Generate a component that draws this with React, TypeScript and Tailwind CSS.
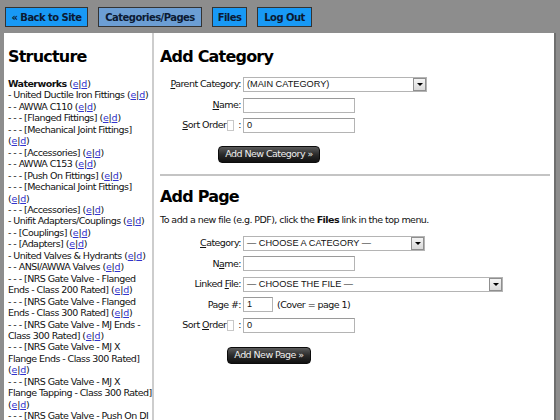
import React from "react";

const sans = "[font-family:'DejaVu_Sans',Verdana,sans-serif]";
const arial = "[font-family:'Liberation_Sans',Arial,sans-serif]";

function Ed() {
  return (
    <span className="tracking-[-0.2px]">
      (<a className="text-[#3333cc] underline">e</a>|<a className="text-[#3333cc] underline">d</a>)
    </span>
  );
}

const items: string[] = [
  "- United Ductile Iron Fittings ",
  "- - AWWA C110 ",
  "- - - [Flanged Fittings] ",
  "- - - [Mechanical Joint Fittings]\n",
  "- - - [Accessories] ",
  "- - AWWA C153 ",
  "- - - [Push On Fittings] ",
  "- - - [Mechanical Joint Fittings]\n",
  "- - - [Accessories] ",
  "- Unifit Adapters/Couplings ",
  "- - [Couplings] ",
  "- - [Adapters] ",
  "- United Valves & Hydrants ",
  "- - ANSI/AWWA Valves ",
  "- - - [NRS Gate Valve - Flanged\nEnds - Class 200 Rated] ",
  "- - - [NRS Gate Valve - Flanged\nEnds - Class 300 Rated] ",
  "- - - [NRS Gate Valve - MJ Ends -\nClass 300 Rated] ",
  "- - - [NRS Gate Valve - MJ X\nFlange Ends - Class 300 Rated]\n",
  "- - - [NRS Gate Valve - MJ X\nFlange Tapping - Class 300 Rated]\n",
  "- - - [NRS Gate Valve - Push On DI\nPipe - Class 250 Rated] ",
];

function NavBtn({ label, w, active }: { label: string; w: string; active?: boolean }) {
  return (
    <div
      className={`${w} h-[20px] border border-[#333] flex items-center justify-center text-[10px] font-bold tracking-[-0.55px] text-[#0b1a33] ${
        active ? "bg-[#6c9ed4]" : "bg-[#1899f5]"
      }`}
    >
      {label}
    </div>
  );
}

function Select({ w, text }: { w: string; text: string }) {
  return (
    <div className={`${w} h-[15px] border border-[#b4b4b4] bg-white flex items-stretch`}>
      <div className={`flex-1 ${arial} text-[9.2px] leading-[13px] pl-[3px] text-[#111] tracking-normal`}>{text}</div>
      <div className="w-[13px] border border-[#8f8f8f] bg-gradient-to-b from-[#f4f4f4] to-[#d9d9d9] flex items-center justify-center">
        <div className="w-0 h-0 border-l-[3px] border-r-[3px] border-t-[3px] border-l-transparent border-r-transparent border-t-black" />
      </div>
    </div>
  );
}

function Input({ w, value }: { w: string; value?: string }) {
  return (
    <div
      className={`${w} h-[15px] border border-[#b4b4b4] border-t-[#9a9a9a] bg-white ${arial} text-[9.2px] leading-[13px] pl-[3px] text-[#111] tracking-normal`}
    >
      {value}
    </div>
  );
}

function Row({ label, children }: { label: React.ReactNode; children: React.ReactNode }) {
  return (
    <div className="flex items-center h-[15px]">
      <div className="w-[81px] shrink-0 text-right whitespace-nowrap">{label}</div>
      <div className="ml-[2px] flex items-center">{children}</div>
    </div>
  );
}

function SortLabel({ u }: { u: "S" | "O" }) {
  return (
    <span className="inline-flex items-center justify-end">
      {u === "S" ? (
        <span>
          <span className="underline">S</span>ort Order
        </span>
      ) : (
        <span>
          Sort <span className="underline">O</span>rder
        </span>
      )}
      <span className="inline-block w-[7px] h-[11px] border border-[#c8c8c8] ml-[1px]" />
      <span className="ml-[4px]">:</span>
    </span>
  );
}

function DarkBtn({ label, cls }: { label: string; cls: string }) {
  return (
    <div
      className={`${cls} h-[17px] rounded-[4px] bg-gradient-to-b from-[#5c5c5c] via-[#2b2b2b] to-[#111] text-[#eeeeee] text-[9.5px] flex items-center justify-center border border-[#0c0c0c]`}
    >
      {label}
    </div>
  );
}

export default function App() {
  return (
    <div className={`w-[560px] h-[420px] overflow-hidden bg-[#8d8d8d] ${sans}`}>
      <div className="flex gap-[10px] pt-[7px] pl-[5px]">
        <NavBtn label="« Back to Site" w="w-[83px]" />
        <NavBtn label="Categories/Pages" w="w-[104px]" active />
        <NavBtn label="Files" w="w-[35px]" />
        <NavBtn label="Log Out" w="w-[55px]" />
      </div>
      <div className="mt-[6px] ml-[4px] w-[552px] h-[400px] bg-white border-r-2 border-[#6f6f6f] flex text-[9.5px] tracking-[-0.55px] text-[#111]">
        <div className="w-[150px] shrink-0 border-r-2 border-[#cdcdcd] pl-[4px] pt-[14px] overflow-hidden">
          <h2 className="text-[16px] font-bold leading-[20px] tracking-[-0.8px] text-black">Structure</h2>
          <div className="mt-[11px] leading-[11.45px] whitespace-pre">
            <div>
              <b>Waterworks</b> <Ed />
            </div>
            {items.map((t, i) => (
              <div key={i}>
                {t}
                <Ed />
              </div>
            ))}
          </div>
        </div>
        <div className="flex-1 pl-[6px] pr-[4px] pt-[14px]">
          <h2 className="text-[16px] font-bold leading-[20px] tracking-[-0.8px] text-black">Add Category</h2>
          <div className="mt-[10px] flex flex-col gap-[5.5px]">
            <Row
              label={
                <>
                  <span className="underline">P</span>arent Category:
                </>
              }
            >
              <Select w="w-[184px]" text="(MAIN CATEGORY)" />
            </Row>
            <Row
              label={
                <>
                  <span className="underline">N</span>ame:
                </>
              }
            >
              <Input w="w-[112px]" />
            </Row>
            <Row label={<SortLabel u="S" />}>
              <Input w="w-[112px]" value="0" />
            </Row>
          </div>
          <DarkBtn label="Add New Category »" cls="mt-[13px] ml-[58px] w-[102px]" />
          <div className="mt-[11px] border-t-2 border-[#c4c4c4]" />
          <h2 className="mt-[10.5px] text-[16px] font-bold leading-[20px] tracking-[-0.8px] text-black">Add Page</h2>
          <p className="mt-[7.5px] leading-[11.45px]">
            To add a new file (e.g. PDF), click the <b>Files</b> link in the top menu.
          </p>
          <div className="mt-[10.5px] flex flex-col gap-[5.5px]">
            <Row
              label={
                <>
                  <span className="underline">C</span>ategory:
                </>
              }
            >
              <Select w="w-[182px]" text="— CHOOSE A CATEGORY —" />
            </Row>
            <Row
              label={
                <>
                  N<span className="underline">a</span>me:
                </>
              }
            >
              <Input w="w-[112px]" />
            </Row>
            <Row
              label={
                <>
                  Linked <span className="underline">F</span>ile:
                </>
              }
            >
              <Select w="w-[260px]" text="— CHOOSE THE FILE —" />
            </Row>
            <Row label="Page #:">
              <Input w="w-[30px]" value="1" />
              <span className="ml-[4px]">(Cover = page 1)</span>
            </Row>
            <Row label={<SortLabel u="O" />}>
              <Input w="w-[112px]" value="0" />
            </Row>
          </div>
          <DarkBtn label="Add New Page »" cls="mt-[14px] ml-[67px] w-[84px]" />
        </div>
      </div>
    </div>
  );
}
